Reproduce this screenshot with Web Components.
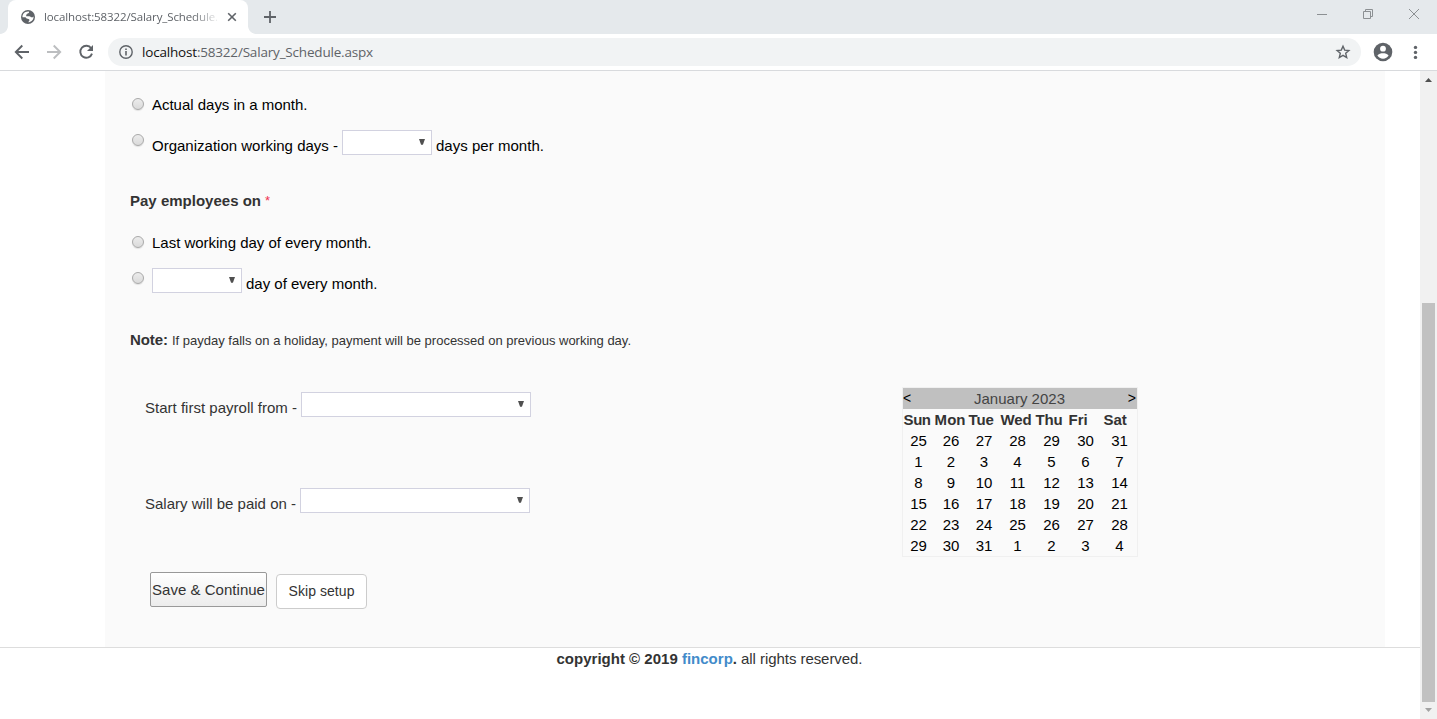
<!DOCTYPE html>
<html lang="en">
<head>
<meta charset="utf-8">
<title>Salary Schedule</title>
<style>
html,body{margin:0;height:100%;overflow:hidden;background:#fff}
body{font-family:"Liberation Sans",Arial,sans-serif;font-size:15px;line-height:20px;color:#333}
</style>
</head>
<body>
<app-window></app-window>
<script>
const define=(name,html,ready)=>customElements.define(name,class extends HTMLElement{
  connectedCallback(){
    if(this.shadowRoot)return;
    const t=document.createElement('template');t.innerHTML=html;
    this.attachShadow({mode:'open'}).append(t.content.cloneNode(true));
    if(ready)ready.call(this,this.shadowRoot);
  }
});

/* A single line of text whose tracking is adjusted to fill a given width. */
define('fit-text',`<style>:host{display:block;white-space:pre;flex:none}span{display:inline-block}</style><span><slot></slot></span>`,function(root){
  const w=+this.getAttribute('w');
  if(!w)return;
  const s=root.querySelector('span');
  const n=this.textContent.length;
  s.style.letterSpacing=((w-s.getBoundingClientRect().width)/n)+'px';
  this.style.width=w+'px';
});

define('radio-dot',`<style>:host{display:block;box-sizing:border-box;width:12px;height:12px;flex:none;border:1px solid #a9a9a9;border-radius:50%;background:linear-gradient(#ececec,#dadada);box-shadow:0 1px 1px #0000001a}</style>`);

define('select-box',`<style>
:host{display:flex;box-sizing:border-box;width:var(--w,90px);height:25px;flex:none;border:1px solid #d2d2e0;background:#fff;justify-content:flex-end;padding:8px 6px 0 0}
svg{display:block;width:6px;height:6px}</style>
<svg viewBox="0 0 6 6"><path d="M0 0H6L3.9 5.8H2.1Z" fill="#505050"/></svg>`);

define('browser-tabs',`<style>
:host{display:flex;height:34px;background:#e5e9ec;align-items:stretch;color:#5f6368}
.tab{position:relative;display:flex;align-items:center;box-sizing:border-box;width:240px;margin-left:8px;padding-left:12px;background:#fff;border-radius:8px 8px 0 0}
.tab:before,.tab:after{content:"";position:absolute;bottom:0;width:8px;height:8px}
.tab:before{left:-8px;background:radial-gradient(circle at 0 0,#e5e9ec 7.5px,#fff 8.2px)}
.tab:after{right:-8px;background:radial-gradient(circle at 100% 0,#e5e9ec 7.5px,#fff 8.2px)}
.title{width:174px;margin-left:8px;overflow:hidden;font:11.5px/20px "Open Sans","Noto Sans",sans-serif;-webkit-mask:linear-gradient(90deg,#000 148px,transparent 176px)}
svg{display:block;flex:none}
.close{margin-left:9px}.plus{margin:11px 0 0 16px}
.ctl{display:flex;margin-left:auto}
</style>
<div class="tab">
<svg class="globe" width="16" height="16" viewBox="0 0 16 16"><circle cx="8" cy="8" r="7" fill="#5f6368"/><path d="M8.8 2.4C9.6 3.3 8.7 4.2 7.6 4.3C7.4 5.4 6.6 5.5 6.2 5.6V7.2H9.3C10.5 7.2 10.7 8.2 11.6 8.3C12.6 8.6 13.2 8 13.5 7.3C13.8 10.4 11.8 12.9 8.6 13.4C8.8 12.7 8.6 12.2 9.4 11.6C9.9 10.9 9.3 10.1 8.4 9.9L6.6 9.6L5.5 8.2H2.5C2.2 5.2 4.5 2.1 8.8 2.4Z" fill="#fff"/><path d="M2.5 8.2C2.8 9.8 4.2 9.6 4.8 10.3C5.3 11 5 11.8 5.5 12.9C3.6 12.1 2.5 10.3 2.5 8.2Z" fill="#5f6368"/></svg>
<div class="title"><fit-text w="174">localhost:58322/Salary_Schedule.</fit-text></div>
<svg class="close" width="10" height="10" viewBox="0 0 10 10"><path d="M1.2 1.2L8.8 8.8M8.8 1.2L1.2 8.8" stroke="#5f6368" stroke-width="1.6"/></svg>
</div>
<svg class="plus" width="12" height="12" viewBox="0 0 12 12"><path d="M0 6H12M6 0V12" stroke="#5f6368" stroke-width="1.8"/></svg>
<div class="ctl">
<svg width="120" height="34" viewBox="0 0 120 34" fill="none" stroke="#8c9093"><path d="M0 14.5H10M46.5 11.5H53.5V18.5H46.5ZM48.5 11V9.5H55.5V16.5H54M92 9L102 19M102 9L92 19"/></svg>
</div>`);

define('browser-bar',`<style>
:host{display:flex;box-sizing:border-box;height:37px;align-items:center;background:#fff;border-bottom:1px solid #d8dadd;color:#5f6368}
svg{display:block;flex:none}
.nav{width:108px;height:36px}
.field{display:flex;align-items:center;box-sizing:border-box;width:1253px;height:28px;border-radius:14px;background:#f1f3f4;padding:0 10px;}
fit-text{margin-left:8px;font:13.5px/20px "Open Sans","Noto Sans",sans-serif}
b{font-weight:400;color:#111}
.star{margin-left:auto}
.end{width:76px;height:36px}
</style>
<svg class="nav" viewBox="0 34 108 36" fill="none" stroke="#5f6368" stroke-width="1.9"><path d="M29 52H16.5M22.3 45.5L15.8 52L22.3 58.5"/><path d="M47 52H59.5M53.7 45.5L60.2 52L53.7 58.5" stroke="#bcbec0"/><path d="M91.2 48.2A6 6 0 1 0 92 53.6"/><path d="M93 45V51H87Z" fill="#5f6368" stroke="none"/></svg>
<div class="field">
<svg width="16" height="16" viewBox="0 0 16 16"><circle cx="8" cy="8" r="6.2" fill="none" stroke="#5f6368" stroke-width="1.4"/><path d="M7.2 4.4H8.8V6H7.2ZM7.2 7H8.8V11.6H7.2Z" fill="#5f6368"/></svg>
<fit-text w="231"><b>localhost</b>:58322/Salary_Schedule.aspx</fit-text>
<svg class="star" width="16" height="16" viewBox="0 0 16 16"><path d="M8 2.2L9.7 6.1L13.9 6.5L10.7 9.3L11.7 13.5L8 11.3L4.3 13.5L5.3 9.3L2.1 6.5L6.3 6.1Z" fill="none" stroke="#5f6368" stroke-width="1.4"/></svg>
</div>
<svg class="end" viewBox="1361 34 76 36"><circle cx="1383" cy="52" r="9.3" fill="#5f6368"/><circle cx="1383" cy="48.7" r="2.9" fill="#fff"/><path d="M1377.4 55.6C1378.4 53.8 1381 53.2 1383 53.2S1387.6 53.8 1388.6 55.6C1387.5 57.5 1385.4 58.7 1383 58.7S1378.5 57.5 1377.4 55.6Z" fill="#fff"/><g fill="#5f6368"><circle cx="1415.5" cy="47.4" r="1.7"/><circle cx="1415.5" cy="52.4" r="1.7"/><circle cx="1415.5" cy="57.4" r="1.7"/></g></svg>`);

define('scroll-bar',`<style>
:host{display:flex;flex-direction:column;width:17px;background:#f1f1f1}
i{width:13px;height:399px;margin:215px 2px 0;background:#c1c1c1}
svg{display:block}</style>
<svg width="17" height="17"><path d="M5 11L8.5 7L12 11Z" fill="#505050"/></svg><i></i><svg width="17" height="17"><path d="M5 6L8.5 10L12 6Z" fill="#a3a3a3"/></svg>`);

define('month-calendar',`<style>
:host{display:block;box-sizing:border-box;width:236px;height:170px;border:1px solid #f0f0f0;color:#000;line-height:21px}
.head{display:flex;justify-content:space-between;background:#c0c0c0;height:21px;line-height:21px}
.head span{font-size:14px}.head span:last-child{margin-right:1px}.head fit-text{color:#444}
.grid{display:grid;grid-template-columns:31px 34px 32px 35px 33px 35px 33px;grid-auto-rows:21px;text-align:center}
.h{font-weight:700;color:#333;text-align:left;padding-left:.6px}
</style>
<div class="head"><span>&lt;</span><fit-text w="91">January 2023</fit-text><span>&gt;</span></div><div class="grid"></div>`,function(root){
  const g=root.querySelector('.grid');
  [['Sun',27],['Mon',31],['Tue',25],['Wed',31],['Thu',27],['Fri',19],['Sat',23]].forEach(([d,w])=>{
    const e=document.createElement('div');e.className='h';e.innerHTML='<fit-text w="'+w+'">'+d+'</fit-text>';g.append(e);
  });
  const start=new Date(2022,11,25);
  for(let i=0;i<42;i++){
    const e=document.createElement('div');
    e.textContent=new Date(start.getFullYear(),start.getMonth(),start.getDate()+i).getDate();
    g.append(e);
  }
});

define('form-row',`<style>:host{display:flex;align-items:flex-start;box-sizing:border-box;height:var(--h)}</style><slot></slot>`);

define('action-button',`<style>
:host{display:flex;box-sizing:border-box;height:35px;align-items:center;justify-content:center;width:117px;border:1px solid #999;border-radius:2px;background:linear-gradient(#fff,#ececec)}
:host([plain]){width:91px;padding-bottom:2px;font-size:14px;border-color:#ccc;border-radius:4px;background:#fff}
</style><slot></slot>`);

define('salary-form',`<style>
:host{display:block;box-sizing:border-box;width:1280px;height:576px;margin-left:105px;background:#fafafa;padding:24px 25px 0}
radio-dot{margin:3px 8px 0 2px}
.k{color:#000}
.low{margin-top:6px}
.lower{display:grid;grid-template-columns:757px auto;padding-left:15px}
select-box{margin:0 4px}
.req{color:#f03050;margin-left:4px;font-size:13px}
</style>
<form-row style="--h:35px"><radio-dot></radio-dot><fit-text class="k" w="155.5">Actual days in a month.</fit-text></form-row>
<form-row style="--h:61px"><radio-dot style="margin-top:4px"></radio-dot><fit-text class="k low" w="186">Organization working days -</fit-text><select-box></select-box><fit-text class="k low" w="108">days per month.</fit-text></form-row>
<form-row style="--h:42px"><fit-text w="131"><b>Pay employees on</b></fit-text><span class="req">*</span></form-row>
<form-row style="--h:35px"><radio-dot></radio-dot><fit-text class="k" w="219.5">Last working day of every month.</fit-text></form-row>
<form-row style="--h:62px"><radio-dot style="margin-top:4px"></radio-dot><select-box style="margin-left:0"></select-box><fit-text class="k low" w="131.5">day of every month.</fit-text></form-row>
<form-row style="--h:57px"><fit-text w="38"><b>Note:</b></fit-text><fit-text style="font-size:13px;margin:1px 0 0 4px" w="459">If payday falls on a holiday, payment will be processed on previous working day.</fit-text></form-row>
<div class="lower"><div>
<form-row style="--h:101px;padding-top:5px"><fit-text class="low" w="152">Start first payroll from -</fit-text><select-box style="--w:230px"></select-box></form-row>
<form-row style="--h:84px"><fit-text class="low" w="151">Salary will be paid on -</fit-text><select-box style="--w:230px"></select-box></form-row>
<form-row style="--h:40px;padding-left:5px"><action-button><fit-text w="113">Save &amp; Continue</fit-text></action-button><action-button plain style="margin:2px 0 0 9px"><fit-text w="66">Skip setup</fit-text></action-button></form-row>
</div><month-calendar></month-calendar></div>`);

define('page-footer',`<style>
:host{display:flex;justify-content:center;border-top:1px solid #ddd;padding:1px 1px 0 0}
a{color:#428bca}</style><fit-text w="180.5"><b>copyright © 2019 <a>fincorp</a>.</b></fit-text><fit-text style="margin-left:4px" w="121.5">all rights reserved.</fit-text>`);

define('app-window',`<style>
:host{display:flex;flex-direction:column;height:719px;width:1437px}
.view{display:flex;height:648px}
main{width:1420px}
</style><browser-tabs></browser-tabs><browser-bar></browser-bar><div class="view"><main><salary-form></salary-form><page-footer></page-footer></main><scroll-bar></scroll-bar></div>`);
</script>
</body>
</html>
